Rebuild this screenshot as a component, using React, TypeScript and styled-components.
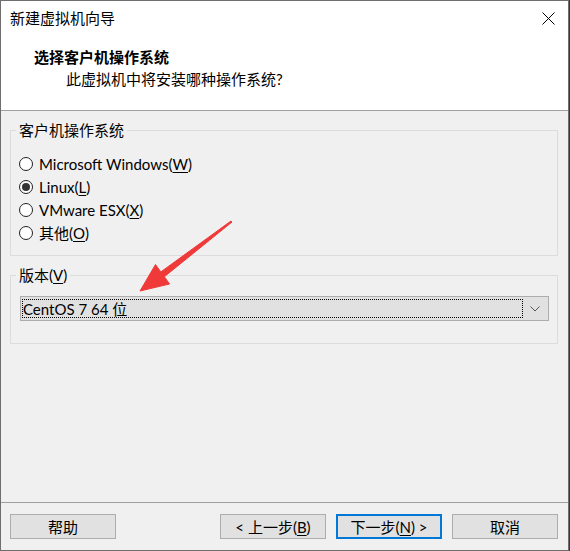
import React from "react";
import styled, { createGlobalStyle } from "styled-components";

const Global = createGlobalStyle`
  html, body { margin: 0; padding: 0; background: #3a3a3a; }
  body { font-family: "Lato", "Noto Sans CJK SC", sans-serif; font-size: 15px; color: #000; }
  * { box-sizing: border-box; }
`;

const Window = styled.div`
  position: relative;
  width: 569px;
  height: 551px;
  border: 1px solid #6e6e6e;
  background: #f0f0f0;
  display: flex;
  flex-direction: column;
`;

const Header = styled.div`
  background: #fff;
  height: 110px;
  border-bottom: 1px solid #a0a0a0;
  flex: none;
`;

const TitleRow = styled.div`
  height: 35px;
  display: flex;
  align-items: center;
  padding: 0 13px 0 9px;
  justify-content: space-between;
`;

const TitleText = styled.div`
  font-size: 15px;
  line-height: 20px;
  margin-top: -1px;
`;

const Heading = styled.div`
  padding-left: 33px;
  font-weight: 700;
  font-size: 15px;
  line-height: 20px;
  margin-top: 11px;
`;

const SubHeading = styled.div`
  padding-left: 65px;
  font-size: 15px;
  line-height: 20px;
  margin-top: 2px;
`;

const Content = styled.div`
  flex: 1;
  padding: 9px 10px 0 9px;
  display: flex;
  flex-direction: column;
  gap: 9px;
`;

const Group = styled.fieldset<{ $h: number }>`
  margin: 0;
  padding: 0;
  border: 1px solid #dcdcdc;
  height: ${(p) => p.$h}px;
  min-width: 0;
`;

const Legend = styled.legend`
  margin-left: 5px;
  padding: 0 3px;
  font-size: 15px;
  line-height: 20px;
`;

const RadioList = styled.div`
  display: flex;
  flex-direction: column;
  padding: 12px 0 0 8px;
`;

const RadioRow = styled.div`
  height: 23px;
  display: flex;
  align-items: center;
  gap: 6px;
  line-height: 20px;
`;

const Circle = styled.span<{ $on?: boolean }>`
  width: 14px;
  height: 14px;
  border-radius: 50%;
  border: 1.2px solid #222;
  background: #fff;
  display: inline-flex;
  align-items: center;
  justify-content: center;
  flex: none;
  &::after {
    content: "";
    width: 8px;
    height: 8px;
    border-radius: 50%;
    background: #333;
    display: ${(p) => (p.$on ? "block" : "none")};
  }
`;

const U = styled.span`
  text-decoration: underline;
  text-underline-offset: 2px;
`;

const Combo = styled.div`
  margin: 11px 8px 0 9px;
  height: 25px;
  background: #e1e1e1;
  border: 1px solid #adadad;
  display: flex;
  align-items: center;
  padding: 2px 2px 2px 1px;
`;

const ComboValue = styled.div`
  flex: 1;
  height: 19px;
  border: 1px dotted #000;
  display: flex;
  align-items: center;
  padding-left: 0;
  line-height: 20px;
`;

const ComboArrow = styled.div`
  width: 23px;
  display: flex;
  justify-content: center;
  align-items: center;
`;

const Footer = styled.div`
  flex: none;
  border-top: 1px solid #a0a0a0;
  height: 48px;
  padding: 11px 10px 11px 9px;
  display: flex;
  gap: 10px;
`;

const Spacer = styled.div`
  flex: 1;
`;

const Button = styled.div<{ $primary?: boolean }>`
  width: 106px;
  height: 25px;
  background: #e1e1e1;
  border: ${(p) => (p.$primary ? "2px solid #0078d7" : "1px solid #adadad")};
  display: flex;
  align-items: center;
  justify-content: center;
  line-height: 20px;
  font-size: 15px;
`;

const Overlay = styled.svg`
  position: absolute;
  left: -1px;
  top: -1px;
  pointer-events: none;
`;

const radios: { label: React.ReactNode; on?: boolean }[] = [
  { label: <>Microsoft Windows(<U>W</U>)</> },
  { label: <>Linux(<U>L</U>)</>, on: true },
  { label: <>VMware ESX(<U>X</U>)</> },
  { label: <>其他(<U>O</U>)</> },
];

export default function App() {
  return (
    <>
      <Global />
      <Window>
        <Header>
          <TitleRow>
            <TitleText>新建虚拟机向导</TitleText>
            <svg width="13" height="13" viewBox="0 0 13 13">
              <path d="M0.5 0.5 L12.5 12.5 M12.5 0.5 L0.5 12.5" stroke="#000" strokeWidth="1" />
            </svg>
          </TitleRow>
          <Heading>选择客户机操作系统</Heading>
          <SubHeading>此虚拟机中将安装哪种操作系统?</SubHeading>
        </Header>
        <Content>
          <Group $h={136}>
            <Legend>客户机操作系统</Legend>
            <RadioList>
              {radios.map((r, i) => (
                <RadioRow key={i}>
                  <Circle $on={r.on} />
                  <span>{r.label}</span>
                </RadioRow>
              ))}
            </RadioList>
          </Group>
          <Group $h={79}>
            <Legend>
              版本(<U>V</U>)
            </Legend>
            <Combo>
              <ComboValue>CentOS 7 64 位</ComboValue>
              <ComboArrow>
                <svg width="10" height="6" viewBox="0 0 10 6">
                  <path d="M0.5 0.5 L5 5 L9.5 0.5" stroke="#555" strokeWidth="1" fill="none" />
                </svg>
              </ComboArrow>
            </Combo>
          </Group>
        </Content>
        <Footer>
          <Button>帮助</Button>
          <Spacer />
          <Button>
            &lt; 上一步(<U>B</U>)
          </Button>
          <Button $primary>
            下一步(<U>N</U>) &gt;
          </Button>
          <Button>取消</Button>
        </Footer>
        <Overlay width="569" height="551" viewBox="0 0 569 551">
          <path
            d="M232 222 L164.4 276.7 L169.5 284 L140 291 L155.5 264.5 L160.8 271.9 L231 221 Z"
            fill="#f03a3a"
            stroke="#f03a3a"
            strokeWidth="1"
            strokeLinejoin="round"
          />
        </Overlay>
      </Window>
    </>
  );
}
